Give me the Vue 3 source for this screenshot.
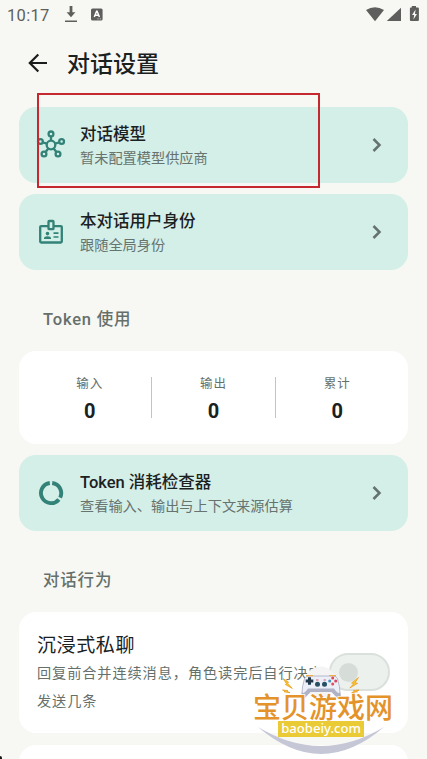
<script setup>
const stats = [
  { label: '输入', value: 0 },
  { label: '输出', value: 0 },
  { label: '累计', value: 0 }
]
</script>

<template>
  <div class="screen">
    <header class="status">
      <span class="time">10:17</span>
      <svg class="download" viewBox="0 0 12 16"><path d="M4.600 0h2.800v6.200h3L6 11.200 1.600 6.200h3zM0 14.500h12v1.400H0z" /></svg>
      <svg class="badge" viewBox="0 0 12 13">
        <rect y=".4" width="11.600" height="12" rx="1.500" />
        <path class="mark" d="M3.300 9 5.600 3.300h.5L8.400 9M4.200 7.200h3.300" />
        <path class="dots" d="M6.500 10.800h1M8.800 10.800h1" />
      </svg>
      <svg class="system" viewBox="0 0 56 18">
        <path d="M1 4Q9.900-1.700 19 4L10 15.200z" />
        <path d="M36 1.800V15H21.800z" />
        <path d="M46.800 0h4.200v1.500h1.900q1 0 1 1V14q0 1-1 1h-7q-1 0-1-1V2.500q0-1 1-1h.9z" />
        <path class="bolt" d="M50.600 3.600 47 9h2.200l-.8 4.500L52 8h-2z" />
      </svg>
    </header>

    <div class="appbar">
      <svg class="back" viewBox="0 0 20 20"><path d="M19 10H2M10.300 1.500 1.800 10l8.500 8.500" /></svg>
      <h1>对话设置</h1>
    </div>

    <main>
      <section class="entry">
        <svg class="icon" viewBox="0 0 28 28">
          <path d="M14 9V6M10 12.700 6 11.500M18 12.700l4-1.200M11.300 17.500 8.600 21M16.700 17.500l2.700 3.500" />
          <circle cx="14" cy="14" r="4.300" />
          <circle cx="14" cy="2.900" r="2.400" />
          <circle cx="3.400" cy="10.500" r="2.400" />
          <circle cx="24.600" cy="10.500" r="2.400" />
          <circle cx="7" cy="23" r="2.400" />
          <circle cx="21" cy="23" r="2.400" />
        </svg>
        <div class="copy"><h2>对话模型</h2><p>暂未配置模型供应商</p></div>
        <svg class="chevron" viewBox="0 0 10 14"><path d="m1.500 1 6 6-6 6" /></svg>
      </section>

      <section class="entry">
        <svg class="icon" viewBox="0 0 28 28">
          <path d="M11 8.100H4.200q-1 0-1 1v14.400q0 1 1 1h19.600q1 0 1-1V9.100q0-1-1-1H17" />
          <rect x="11.500" y="3" width="5" height="8.200" rx=".8" />
          <path class="thin" d="M16.500 15.200h5M16.500 19h5" />
          <circle class="solid" cx="10.500" cy="15.600" r="1.800" />
          <path class="solid" d="M7 21v-.8q0-2 3.500-2t3.500 2v.8z" />
        </svg>
        <div class="copy"><h2>本对话用户身份</h2><p>跟随全局身份</p></div>
        <svg class="chevron" viewBox="0 0 10 14"><path d="m1.500 1 6 6-6 6" /></svg>
      </section>

      <h3>Token 使用</h3>

      <section class="stats">
        <div v-for="s in stats" :key="s.label" class="stat">
          <span>{{ s.label }}</span>
          <strong>{{ s.value }}</strong>
        </div>
      </section>

      <section class="entry">
        <svg class="icon ring" viewBox="0 0 28 28">
          <path d="M15.200 4A10.100 10.100 0 0 1 23.100 18.600" />
          <path d="M21.900 20.400A10.100 10.100 0 1 1 12.800 4" />
        </svg>
        <div class="copy"><h2>Token 消耗检查器</h2><p>查看输入、输出与上下文来源估算</p></div>
        <svg class="chevron" viewBox="0 0 10 14"><path d="m1.500 1 6 6-6 6" /></svg>
      </section>

      <h3>对话行为</h3>

      <section class="behavior">
        <div class="detail">
          <h4>沉浸式私聊</h4>
          <p>回复前合并连续消息，角色读完后自行决定发送几条</p>
        </div>
        <div class="switch"><i></i></div>
      </section>
      <section class="behavior next"></section>
    </main>

    <div class="highlight"></div>
    <div class="corner"></div>

    <div class="watermark">
      <svg class="art" viewBox="0 0 140 85">
        <circle cx="66.500" cy="8.500" r="16" fill="#f3f4f3" />
        <path d="M4 53Q67 107 130 53 67 91 4 53z" fill="#c5c7d7" />
        <g fill="#f6c52e" stroke="#e9981c" stroke-width=".7">
          <path d="m29 4.500 5.500 3.500-.8 1.200 4.600 5.300-7-4 1-1z" />
          <path d="m104.500 3.500-7 5.500 2.300.6-4 4.400 7.800-4.700-2.500-.6z" />
          <path d="m28.500 16 5.500.5-.8.8 2.800 1.500-6-1 1-.8zM105 16l-5.500.5.8.8-2.800 1.500 6-1-1-.8z" />
        </g>
        <path d="M50 23.500q-2.500 2.500-2.300-2 .4-9.500 2.800-17Q51.500 2 55 2h24q3.500 0 4.500 2.500 2.400 7.500 2.800 17 .2 4.500-2.300 2l-6.200-7H56.200z" fill="#eceef8" />
        <path d="M48 18q-1.500 9.500 2.500 6.500l6-6.500h21l6 6.500q4 3 2.500-6.500-1.500 3-6-3.500H54q-4.500 6.500-6 3.500z" fill="#b0b3c6" />
        <path d="M50 23.500q-2.500 2.500-2.300-2 .4-9.500 2.800-17Q51.500 2 55 2h24q3.500 0 4.500 2.500 2.400 7.500 2.800 17 .2 4.500-2.300 2" fill="none" stroke="#a8abc0" stroke-width=".8" />
        <path d="M52 1.700h7M75 1.700h7" stroke="#edb04d" stroke-width="1.300" />
        <path d="M55.500 3.200v7.600M51.700 7h7.600" stroke="#22394c" stroke-width="3" />
        <circle cx="63.500" cy="10.300" r="2.500" fill="#285064" />
        <circle cx="70.500" cy="10.300" r="2.500" fill="#285064" />
        <path d="M62 6h2.500M69.500 6H72" stroke="#d86578" />
        <circle cx="78.700" cy="3.900" r="1.500" fill="#e24b58" />
        <circle cx="78.700" cy="9.900" r="1.500" fill="#e24b58" />
        <circle cx="75.700" cy="6.900" r="1.500" fill="#4292bd" />
        <circle cx="81.700" cy="6.900" r="1.500" fill="#d9435b" />
      </svg>
      <div class="brand">宝贝游戏网</div>
      <div class="domain">baobeiy.com</div>
    </div>
  </div>
</template>

<style>
body { margin: 0; background: #f7f8f3; overflow: hidden; }
</style>

<style scoped>
* { box-sizing: border-box; }
.screen {
  position: relative;
  width: 427px;
  height: 759px;
  overflow: hidden;
  background: #f7f8f3;
  color: #1b211f;
  font-family: Roboto, "Noto Sans CJK SC", sans-serif;
}
h1, h2, h3, h4, p { margin: 0; }
svg { display: block; flex: none; overflow: visible; }
.status { display: flex; align-items: flex-start; height: 36px; padding: 6px 3px 0 7px; fill: #5e5f5c; }
.time { width: 58px; font: 16.500px/19px Roboto, sans-serif; letter-spacing: .3px; color: #5e5f5c; }
.download { width: 12px; height: 16px; }
.badge { width: 12px; height: 13px; margin: 1.500px 0 0 14px; }
.mark { fill: none; stroke: #fff; stroke-width: 1.500; }
.dots { stroke: #ddd; }
.system { width: 56px; height: 18px; margin-left: auto; margin-right: 3px; }
.bolt { fill: #f7f8f3; }
.appbar { display: flex; align-items: center; height: 53px; padding-left: 28px; }
.back { width: 20px; height: 20px; margin-right: 19px; fill: none; stroke: #1b1d1c; stroke-width: 2.200; }
h1 { padding-top: 4px; font-size: 23px; line-height: 32px; font-weight: 500; }
main { padding: 18px 19px 0; }
.entry {
  display: flex;
  align-items: center;
  height: 75.500px;
  margin-bottom: 11.500px;
  padding: 0 26px 0 18px;
  border-radius: 17px;
  background: #d4eee8;
}
.icon { width: 28px; height: 28px; margin-right: 15px; fill: none; stroke: #328277; stroke-width: 2.300; }
.icon.ring { stroke-width: 3.900; }
.thin { stroke-width: 1.700; }
.solid { fill: #328277; stroke: none; }
.copy { flex: 1; padding-top: 3px; }
h2 { font-size: 16.500px; line-height: 24px; font-weight: 500; white-space: nowrap; }
.copy p { font-size: 14.200px; line-height: 23px; color: #66736e; white-space: nowrap; }
.chevron { width: 10px; height: 14px; fill: none; stroke: #64736d; stroke-width: 2.500; }
h3 { height: 70px; padding: 27px 0 0 24px; font-size: 16.500px; line-height: 24px; font-weight: 500; letter-spacing: .8px; color: #66706b; }
.stats { display: grid; grid-template-columns: repeat(3, 1fr); height: 92.500px; margin-bottom: 11.500px; padding: 26px 9.500px 26px 8.500px; border-radius: 17px; background: #fff; }
.stat { display: flex; flex-direction: column; align-items: center; height: 41px; padding-left: 1px; }
.stat + .stat { padding-left: 0; border-left: 1px solid #c0c4c2; }
.stat span { font-size: 12.500px; line-height: 14px; letter-spacing: 1px; color: #66706b; }
.stat strong { margin-top: 6px; font-size: 20px; line-height: 28px; font-weight: 700; }
.behavior { display: flex; height: 121px; margin-bottom: 12px; padding: 18px 18px 0; border-radius: 17px; background: #fff; }
.detail { width: 292px; flex: none; }
h4 { padding-top: 2px; font-size: 19px; line-height: 27px; font-weight: 400; letter-spacing: .6px; }
.detail p { font-size: 14.200px; line-height: 28px; letter-spacing: .9px; color: #66706b; }
.switch { width: 61px; height: 38px; margin: 23px 0 0; border: 2px solid #dae1dc; border-radius: 19px; background: #edf1ed; padding: 7.500px; }
.switch i { display: block; width: 19px; height: 19px; border-radius: 50%; background: #d6ddd8; }
.highlight { position: absolute; left: 37px; top: 93px; width: 283px; height: 95px; border: 2px solid #c5282f; }
.corner { position: absolute; left: 0; top: 756px; width: 2px; height: 3px; background: #171717; border-top-right-radius: 2px; }
.watermark { position: absolute; left: 254px; top: 674px; width: 140px; height: 85px; }
.art { position: absolute; left: 0; top: 0; width: 140px; height: 85px; }
.brand { position: absolute; left: -1px; top: 22px; font-size: 28px; line-height: 25px; font-weight: 500; color: #e4932b; white-space: nowrap; -webkit-text-stroke: 1.500px #fff; paint-order: stroke fill; }
.domain { position: absolute; left: 24px; top: 47px; width: 86px; height: 16px; background: #eacb35; color: #fff; font-family: "Noto Sans", sans-serif; font-size: 13.100px; line-height: 15px; font-weight: 500; text-align: center; }
</style>
